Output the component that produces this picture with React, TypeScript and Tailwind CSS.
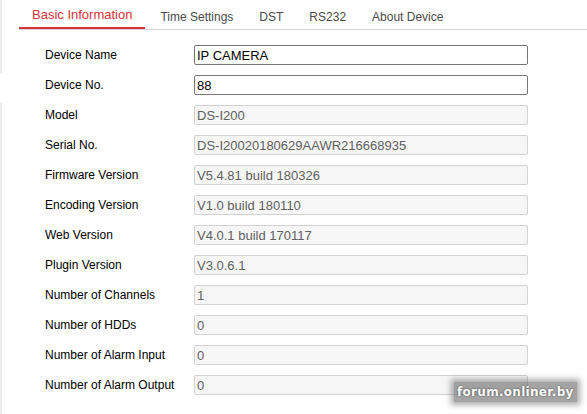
const tabs = ["Basic Information", "Time Settings", "DST", "RS232", "About Device"];

interface Field {
    label: string;
    value: string;
    editable?: boolean;
}

const fields: Field[] = [
    { label: "Device Name", value: "IP CAMERA", editable: true },
    { label: "Device No.", value: "88", editable: true },
    { label: "Model", value: "DS-I200" },
    { label: "Serial No.", value: "DS-I20020180629AAWR216668935" },
    { label: "Firmware Version", value: "V5.4.81 build 180326" },
    { label: "Encoding Version", value: "V1.0 build 180110" },
    { label: "Web Version", value: "V4.0.1 build 170117" },
    { label: "Plugin Version", value: "V3.0.6.1" },
    { label: "Number of Channels", value: "1" },
    { label: "Number of HDDs", value: "0" },
    { label: "Number of Alarm Input", value: "0" },
    { label: "Number of Alarm Output", value: "0" },
];

function FormRow({ label, value, editable = false }: Field) {
    const inputClass = editable
        ? "shrink-0 w-[334px] h-[20px] px-[2px] border border-[#767676] rounded-[2px] bg-white text-[13px] text-black outline-none"
        : "shrink-0 w-[334px] h-[20px] px-[2px] border border-[#d2d2d2] rounded-[2px] bg-[#f6f6f6] text-[13px] text-[#5f5f5f] outline-none";
    return (
        <div className="h-[30px] flex items-center">
            <label className="shrink-0 w-[175px] pl-[26px] text-[12px] text-black whitespace-nowrap">{label}</label>
            <input className={inputClass} value={value} readOnly />
        </div>
    );
}

export default function App() {
    return (
        <div className="relative w-[587px] h-[414px] overflow-hidden bg-white flex font-['Liberation_Sans',Arial,sans-serif]">
            {/* left frame edge */}
            <div className="w-[2px] shrink-0 flex flex-col">
                <div className="h-[73px] bg-[#ececec]" />
                <div className="h-[30px]" />
                <div className="flex-1 bg-[#ececec]" />
            </div>

            <div className="flex-1 pl-[17px]">
                <ul className="flex border-b border-[#d4d4d4] list-none m-0 p-0">
                    {tabs.map((tab, i) => (
                        <li
                            key={tab}
                            className={
                                i === 0
                                    ? "h-[29px] px-[13px] mr-[2px] pt-[5px] text-[13px] text-[#d7323a] border-b-2 border-[#d7323a] whitespace-nowrap"
                                    : "h-[29px] px-[13px] pt-[8px] text-[12px] text-[#4a4a4a] whitespace-nowrap"
                            }
                        >
                            {tab}
                        </li>
                    ))}
                </ul>

                <div className="pt-[10px]">
                    {fields.map(f => (
                        <FormRow key={f.label} {...f} />
                    ))}
                </div>
            </div>

            {/* watermark */}
            <span className="absolute left-[454px] top-[382px] px-[3px] h-[20px] leading-[20px] bg-[rgba(90,90,90,0.55)] shadow-[0_0_6px_3px_rgba(90,90,90,0.5)] text-white text-[12px] font-bold tracking-[0.3px] font-['DejaVu_Sans',Verdana,sans-serif] [text-shadow:0_0_2px_rgba(0,0,0,0.6)]">
                forum.onliner.by
            </span>
        </div>
    );
}
